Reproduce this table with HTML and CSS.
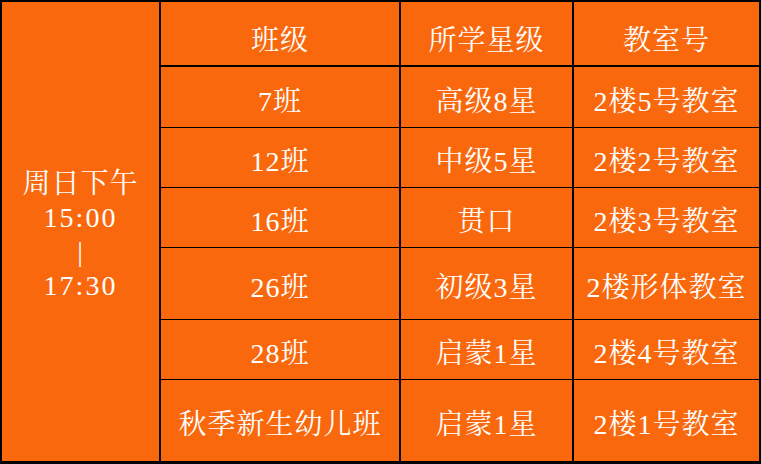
FILE: index.html
```html
<!DOCTYPE html>
<html lang="zh-CN">
<head>
<meta charset="utf-8">
<title>课程表</title>
<link rel="stylesheet" href="styles.css">
</head>
<body>
<div class="schedule">
  <div class="cell time">
    <div class="time-line">周日下午</div>
    <div class="time-line digits">15:00</div>
    <div class="time-line">|</div>
    <div class="time-line digits">17:30</div>
  </div>
  <div class="cell head">班级</div>
  <div class="cell head">所学星级</div>
  <div class="cell head">教室号</div>

  <div class="cell">7班</div>
  <div class="cell">高级8星</div>
  <div class="cell">2楼5号教室</div>

  <div class="cell">12班</div>
  <div class="cell">中级5星</div>
  <div class="cell">2楼2号教室</div>

  <div class="cell">16班</div>
  <div class="cell">贯口</div>
  <div class="cell">2楼3号教室</div>

  <div class="cell">26班</div>
  <div class="cell">初级3星</div>
  <div class="cell">2楼形体教室</div>

  <div class="cell">28班</div>
  <div class="cell">启蒙1星</div>
  <div class="cell">2楼4号教室</div>

  <div class="cell">秋季新生幼儿班</div>
  <div class="cell">启蒙1星</div>
  <div class="cell">2楼1号教室</div>
</div>
</body>
</html>
```
FILE: styles.css
```css
html, body {
  margin: 0;
  padding: 0;
  background: #000;
}

.schedule {
  width: 761px;
  height: 464px;
  box-sizing: border-box;
  padding: 2px 2px 3px 2px;
  background: #000;
  display: grid;
  grid-template-columns: 157px 238px 171px 185px;
  grid-template-rows: 64px 60px 59px 59px 71px 59px 81px;
  column-gap: 2px;
  row-gap: 1px;
  font-family: "Liberation Serif", "Noto Serif CJK SC", "Noto Sans CJK SC", serif;
  font-size: 28px;
  color: #fff;
}

.cell {
  background: #F9680D;
  display: flex;
  align-items: center;
  justify-content: center;
  text-align: center;
  letter-spacing: 1px;
  padding-top: 3px;
  box-sizing: border-box;
  white-space: nowrap;
}

.head {
  border-bottom: 1px solid #000;
  padding-top: 8px;
}

.time {
  grid-row: 1 / -1;
  grid-column: 1;
  flex-direction: column;
  line-height: 34px;
  padding-top: 6px;
}

.time-line.digits {
  letter-spacing: 2px;
}
```
